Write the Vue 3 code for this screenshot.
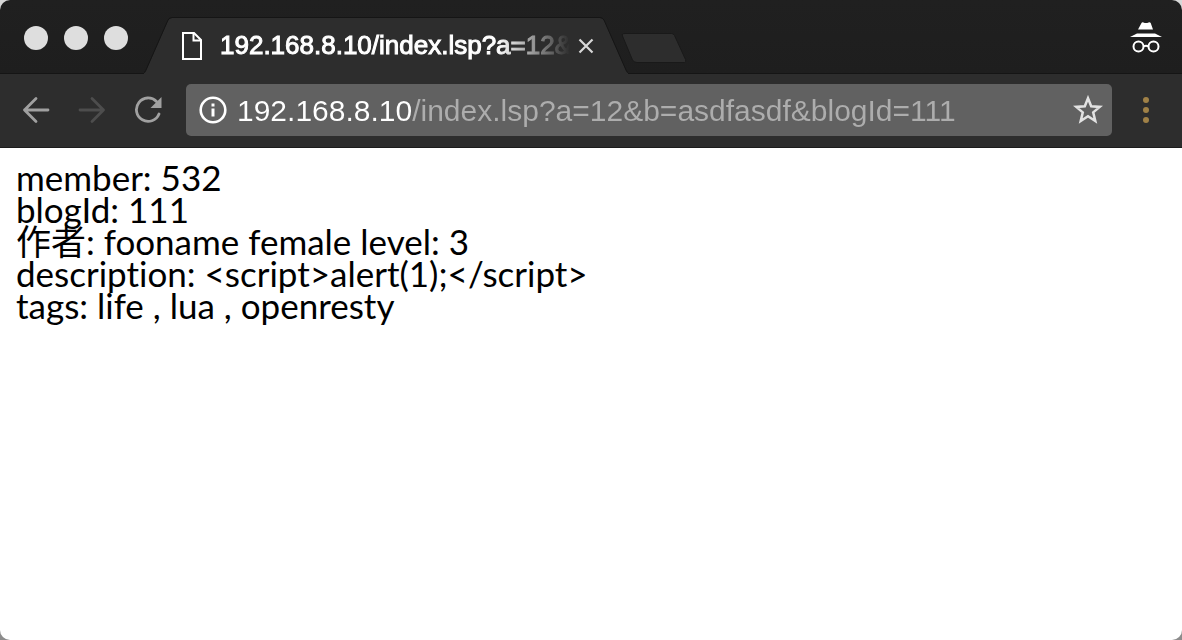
<script setup>
import { ref } from 'vue'

const host = '192.168.8.10'
const url = ref(host + '/index.lsp?a=12&b=asdfasdf&blogId=111')
const tabTitle = host + '/index.lsp?a=12&'
const lines = [
  'member: 532',
  'blogId: 111',
  '作者: fooname female level: 3',
  'description: <script>alert(1);<\/script>',
  'tags: life , lua , openresty',
]
</script>

<template>
  <div class="window">
    <header class="strip">
      <div class="lights">
        <button v-for="name in ['Close', 'Minimize', 'Zoom']" :key="name" class="light" :aria-label="name"></button>
      </div>
      <div class="tab">
        <svg class="slope" width="28" height="57" viewBox="0 0 28 57" aria-hidden="true">
          <path d="M0 57V56Q1 56 2 53.500L24 3.500Q25.500 1 28 1V57Z" fill="#2d2d2d" />
          <path d="M0 55.500Q1 55.500 2 53L24 3Q25.500 .5 28 .5" fill="none" stroke="#151515" />
        </svg>
        <div class="tab-body">
          <svg width="20" height="28" viewBox="0 0 20 28" fill="none" stroke="#fff" stroke-width="2" aria-hidden="true">
            <path d="M1 1H12L19 8V27H1Z" />
            <path d="M11.500 1V8.500H19" />
          </svg>
          <span class="title">{{ tabTitle }}</span>
          <button class="close" aria-label="Close tab">
            <svg width="16" height="16" viewBox="0 0 16 16" fill="none" stroke="#d8d8d8" stroke-width="2.200" aria-hidden="true">
              <path d="M1.500 1.500L14.500 14.500M14.500 1.500L1.500 14.500" />
            </svg>
          </button>
        </div>
        <svg class="slope" width="28" height="57" viewBox="0 0 28 57" aria-hidden="true">
          <path d="M28 57V56Q27 56 26 53.500L4 3.500Q2.500 1 0 1V57Z" fill="#2d2d2d" />
          <path d="M28 55.500Q27 55.500 26 53L4 3Q2.500 .5 0 .5" fill="none" stroke="#151515" />
        </svg>
      </div>
      <button class="new-tab" aria-label="New tab">
        <svg width="66" height="32" viewBox="0 0 66 32" aria-hidden="true">
          <path d="M4 1.500H50.500Q52.500 1.500 53.500 3.500L64.500 27.500Q65.500 30.500 63.500 30.500H16Q13 30.500 11.500 28L1.500 4Q.5 1.500 4 1.500Z" fill="#2d2d2d" stroke="#191919" />
        </svg>
      </button>
      <svg class="incognito" width="34" height="32" viewBox="0 0 34 32" role="img" aria-label="Incognito">
        <path d="M12.500 1Q13 0 14.500 .5Q17 1.500 19.500 .5Q21 0 21.700 1L24 7.500H9Z" fill="#fff" />
        <path d="M8 11.500H26L33 15H1Z" fill="#fff" />
        <g fill="none" stroke="#fff" stroke-width="2">
          <circle cx="9.500" cy="24.500" r="5" />
          <circle cx="24.500" cy="24.500" r="5" />
          <path d="M14.500 24.500Q17 22.800 19.500 24.500" />
        </g>
      </svg>
    </header>

    <nav class="toolbar">
      <button class="tool" aria-label="Back">
        <svg width="28" height="28" viewBox="0 0 28 28" fill="none" stroke="#a0a0a0" stroke-width="2.800" stroke-linecap="round" stroke-linejoin="round" aria-hidden="true">
          <path d="M26 14H2.500M14 2.500L2.500 14L14 25.500" />
        </svg>
      </button>
      <button class="tool" aria-label="Forward">
        <svg width="28" height="28" viewBox="0 0 28 28" fill="none" stroke="#4d4d4d" stroke-width="2.800" stroke-linecap="round" stroke-linejoin="round" aria-hidden="true">
          <path d="M2 14H25.500M14 2.500L25.500 14L14 25.500" />
        </svg>
      </button>
      <button class="tool" aria-label="Reload">
        <svg width="28" height="28" viewBox="0 0 28 28" aria-hidden="true">
          <path d="M22.500 5.500A11.700 11.700 0 1 0 25 18" fill="none" stroke="#a0a0a0" stroke-width="2.800" stroke-linecap="round" />
          <path d="M27.500 1V12H16.500Z" fill="#a0a0a0" />
        </svg>
      </button>
      <div class="omnibox">
        <button class="omni-icon" aria-label="View site information">
          <svg width="28" height="28" viewBox="0 0 28 28" aria-hidden="true">
            <circle cx="14" cy="14" r="12.300" fill="none" stroke="#fff" stroke-width="2.600" />
            <path d="M12.500 7.500H15.500V10.500H12.500ZM12.500 12.500H15.500V20.500H12.500Z" fill="#fff" />
          </svg>
        </button>
        <input v-model="url" class="url" type="text" aria-label="Address" spellcheck="false" />
        <button class="omni-icon" aria-label="Bookmark this page">
          <svg width="30" height="30" viewBox="0 0 30 30" aria-hidden="true">
            <path d="M15 3.200L18.200 11.300L26.800 11.900L20.200 17.400L22.300 26L15 21.300L7.700 26L9.800 17.400L3.200 11.900L11.800 11.300Z" fill="none" stroke="#e2e2e2" stroke-width="2.500" />
          </svg>
        </button>
      </div>
      <button class="menu" aria-label="Menu">
        <svg width="6" height="26" viewBox="0 0 6 26" fill="#a08147" aria-hidden="true">
          <circle cx="3" cy="3" r="3" />
          <circle cx="3" cy="13" r="3" />
          <circle cx="3" cy="23" r="3" />
        </svg>
      </button>
    </nav>

    <main class="page">
      <div v-for="line in lines" :key="line">{{ line }}</div>
    </main>
  </div>
</template>

<style>
body {
  background: linear-gradient(#d8d8d8, #8c8c8c);
}
</style>

<style scoped>
.window {
  display: flex;
  flex-direction: column;
  min-height: 100vh;
  border-radius: 10px;
  overflow: hidden;
  background: #fff;
}

button {
  display: flex;
  align-items: center;
  justify-content: center;
  padding: 0;
  border: 0;
  background: none;
}

svg {
  display: block;
  flex: none;
}

.strip {
  display: flex;
  align-items: flex-end;
  height: 74px;
  background: linear-gradient(#202020, #1e1e1e);
  box-shadow: inset 0 -1px #151515;
}

.lights {
  display: flex;
  gap: 16px;
  padding: 0 16px 24px 24px;
}

.light {
  width: 24px;
  height: 24px;
  border-radius: 50%;
  background: #dedede;
}

.tab {
  display: flex;
  flex: 0 1 484px;
  min-width: 0;
}

.tab-body {
  display: flex;
  flex: 1;
  align-items: center;
  min-width: 0;
  padding: 0 6px 0 10px;
  border-top: 1px solid #151515;
  background: #2d2d2d;
}

.title {
  flex: 1;
  margin-left: 18px;
  padding-bottom: 2px;
  overflow: hidden;
  white-space: nowrap;
  font: 26px/32px "Liberation Sans", Arial, sans-serif;
  -webkit-text-stroke: 1px currentColor;
  color: #fff;
  mask-image: linear-gradient(to left, transparent 4px, #000 76px);
}

.close {
  margin-left: 4px;
}

.new-tab {
  margin: 0 auto 10px -7px;
}

.incognito {
  margin: 0 19px 20px 16px;
}

.toolbar {
  display: flex;
  align-items: center;
  height: 74px;
  padding: 0 33px 2px 22px;
  box-sizing: border-box;
  background: #2d2d2d;
  border-bottom: 1px solid #1c1c1c;
}

.tool {
  margin-right: 28px;
}

.omnibox {
  display: flex;
  flex: 1;
  align-items: center;
  height: 52px;
  min-width: 0;
  margin: 0 31px 0 -4px;
  padding: 0 9px 0 13px;
  box-sizing: border-box;
  border-radius: 5px;
  background: #616161;
}

.url {
  flex: 1;
  min-width: 0;
  height: 40px;
  margin: 0 10px;
  padding: 2px 0 0;
  border: 0;
  outline: 0;
  font: 30px/38px "Liberation Sans", Arial, sans-serif;
  color: transparent;
  background: linear-gradient(to right, #fff 175px, #adadad 175px);
  background-clip: text;
}

.page {
  flex: 1;
  padding: 13px 16px;
  font: 35px/32px "Century Gothic", Lato, "Noto Sans CJK SC", sans-serif;
  font-variant-ligatures: none;
  color: #000;
}
</style>
